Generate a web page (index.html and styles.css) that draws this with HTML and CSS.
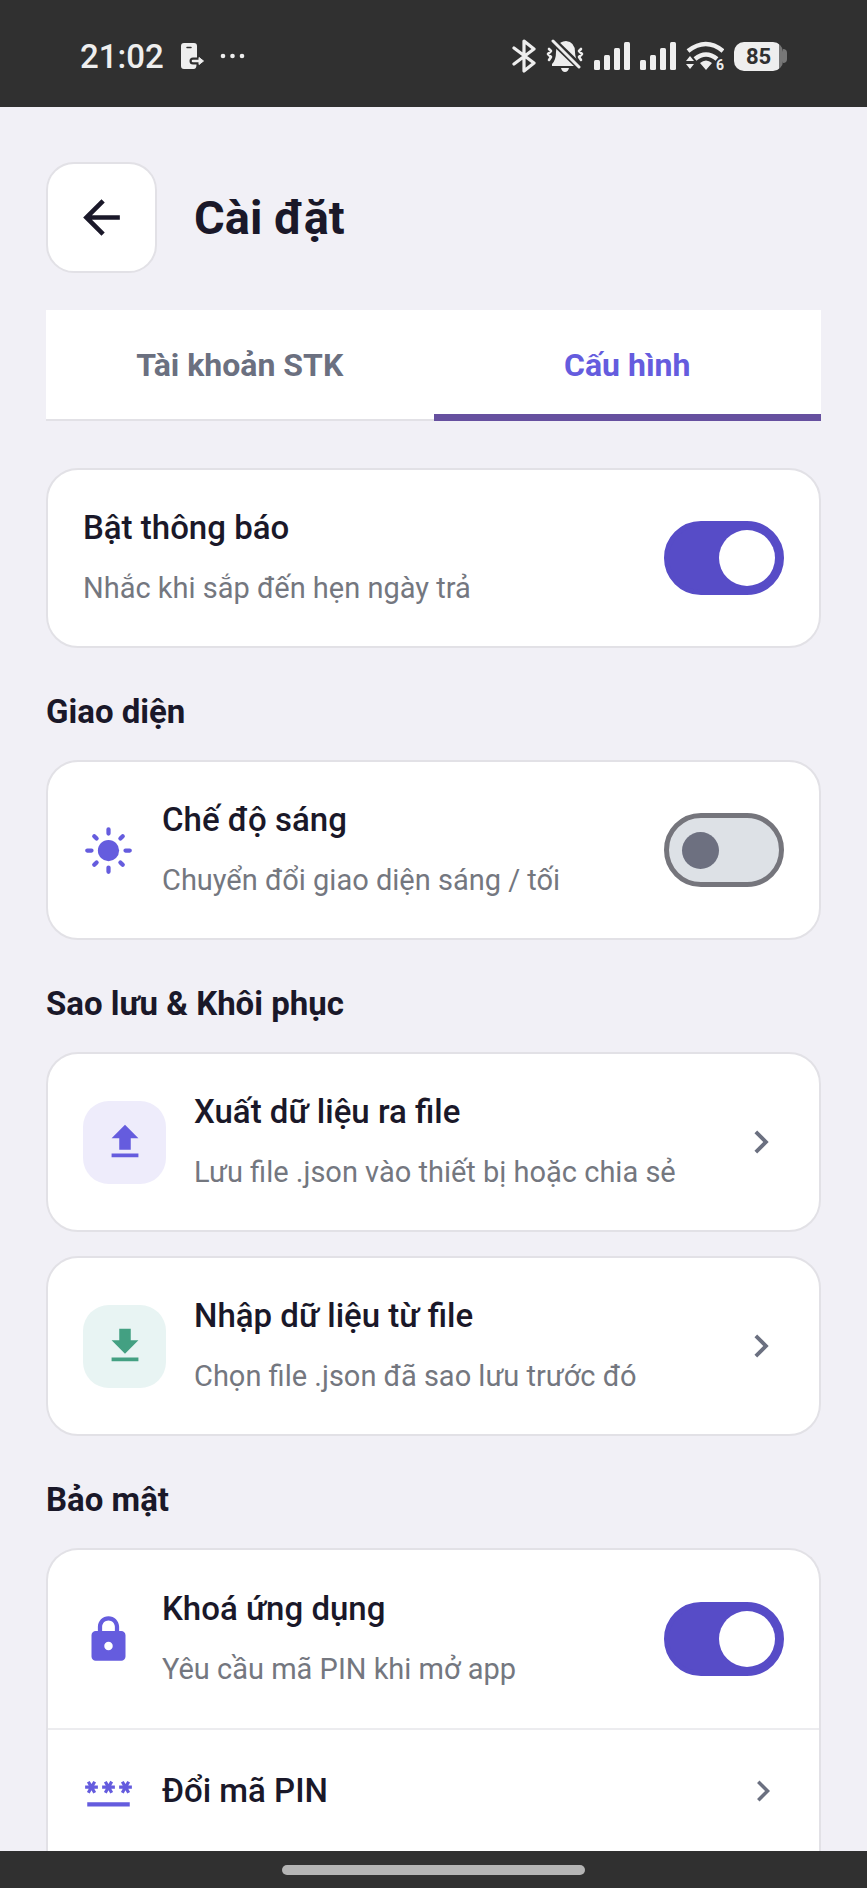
FILE: index.html
```html
<!DOCTYPE html>
<html lang="vi">
<head>
    <meta charset="UTF-8">
    <meta name="viewport" content="width=device-width, initial-scale=1">
    <title>Cài đặt</title>
    <link rel="stylesheet" href="styles.css">
</head>
<body>
<div class="status-bar">
    <div class="status-left">
        <span class="clock">21:02</span>
        <svg width="24" height="28" viewBox="0 0 24 28">
            <path fill="#eee" d="M4 1h10q3 0 3 3v11.500h-4q-3.500 0-3.500 3.500t3.500 3.500h3.500q0 4.500-3 4.500H4q-3 0-3-3V4q0-3 3-3z"/>
            <path stroke="#303030" stroke-width="1.500" stroke-linecap="round" d="M7 5.500h4"/>
            <path fill="none" stroke="#eee" stroke-width="2.600" stroke-linecap="round" d="M13 19h8"/>
            <path fill="#eee" stroke="#eee" stroke-linejoin="round" d="M19 15.500l4.500 3.500-4.500 3.500z"/>
        </svg>
        <svg class="dots" width="26" height="6" viewBox="0 0 26 6" fill="#eee">
            <circle cx="3" cy="3" r="2.300"/>
            <circle cx="12.500" cy="3" r="2.300"/>
            <circle cx="22" cy="3" r="2.300"/>
        </svg>
    </div>
    <div class="status-right">
        <svg width="24" height="34" viewBox="0 0 24 34" fill="none" stroke="#eee" stroke-width="3.200" stroke-linecap="round" stroke-linejoin="round">
            <path d="M2 9l20 15-10 8V2l10 8L2 25"/>
        </svg>
        <svg width="38" height="34" viewBox="0 0 38 34">
            <path fill="#eee" d="M11 8q3-6 9-6 9 1 9 11 0 6 4 12v2H6v-2q4-4 4-12 0-3 1-5zM15 29h8q-1 4-4 4t-4-4z"/>
            <path stroke="#303030" stroke-width="7" d="M4 -1l31 30"/>
            <path stroke="#eee" stroke-width="3" stroke-linecap="round" d="M7 2l26 26"/>
            <path fill="none" stroke="#eee" stroke-width="2.600" stroke-linecap="round" stroke-linejoin="round" d="M3 10l2 2-3 3 3 3-2 3M35 10l-2 2 3 3-3 3 2 3"/>
        </svg>
        <svg width="36" height="30" viewBox="0 0 36 30" fill="#eee">
            <rect x="0" y="19" width="6" height="10" rx="1.500"/>
            <rect x="10" y="14" width="6" height="15" rx="1.500"/>
            <rect x="20" y="7" width="6" height="22" rx="1.500"/>
            <rect x="30" y="1" width="6" height="28" rx="1.500"/>
        </svg>
        <svg width="36" height="30" viewBox="0 0 36 30" fill="#eee">
            <rect x="0" y="19" width="6" height="10" rx="1.500"/>
            <rect x="10" y="14" width="6" height="15" rx="1.500"/>
            <rect x="20" y="7" width="6" height="22" rx="1.500"/>
            <rect x="30" y="1" width="6" height="28" rx="1.500"/>
        </svg>
        <svg width="38" height="32" viewBox="0 0 38 32">
            <path fill="none" stroke="#eee" stroke-width="4.500" d="M2 11q18-14 35 0M9 19q11-9 22 0"/>
            <path fill="#eee" d="M14 23q6-5 12 0l-6 7zM0 21l4-5 4 5zM0 24l4 5 4-5z"/>
            <text x="30" y="30" class="wifi-gen">6</text>
        </svg>
        <span class="battery"><span class="battery-level">85</span></span>
    </div>
</div>

<main class="screen">
    <header class="header">
        <button class="back" type="button" aria-label="Quay lại">
            <svg width="55" height="55" viewBox="0 0 24 24" fill="#1a1829"><path d="M20 11H7.830l5.590-5.590L12 4l-8 8 8 8 1.410-1.410L7.830 13H20z"/></svg>
        </button>
        <h1 class="title">Cài đặt</h1>
    </header>

    <nav class="tabs">
        <button class="tab" type="button">Tài khoản STK</button>
        <button class="tab active" type="button">Cấu hình</button>
    </nav>

    <section class="card">
        <label class="row">
            <span class="text">
                <span class="name">Bật thông báo</span>
                <span class="desc">Nhắc khi sắp đến hẹn ngày trả</span>
            </span>
            <input class="switch" type="checkbox" checked>
        </label>
    </section>

    <h2 class="section-title">Giao diện</h2>
    <section class="card">
        <label class="row">
            <svg class="icon" width="51" height="51" viewBox="0 0 24 24">
                <circle cx="12" cy="12" r="5"/>
                <path stroke="#655cde" stroke-width="2" stroke-linecap="round" d="M12 2v2M12 20v2M2 12h2M20 12h2M5.300 5.300l1.100 1.100M17.600 17.600l1.100 1.100M5.300 18.700l1.100-1.100M17.600 6.400l1.100-1.100"/>
            </svg>
            <span class="text">
                <span class="name">Chế độ sáng</span>
                <span class="desc">Chuyển đổi giao diện sáng / tối</span>
            </span>
            <input class="switch" type="checkbox">
        </label>
    </section>

    <h2 class="section-title">Sao lưu &amp; Khôi phục</h2>
    <div class="card-list">
        <section class="card">
            <button class="row" type="button">
                <span class="badge">
                    <svg class="icon" width="46" height="46" viewBox="0 0 24 24"><path d="M9 16h6v-6h4l-7-7-7 7h4zM5 18h14v2H5z"/></svg>
                </span>
                <span class="text">
                    <span class="name">Xuất dữ liệu ra file</span>
                    <span class="desc">Lưu file .json vào thiết bị hoặc chia sẻ</span>
                </span>
                <svg class="chevron" width="46" height="46" viewBox="0 0 24 24"><path d="M10 6L8.590 7.410 13.170 12l-4.580 4.590L10 18l6-6z"/></svg>
            </button>
        </section>
        <section class="card">
            <button class="row" type="button">
                <span class="badge green">
                    <svg class="icon" width="46" height="46" viewBox="0 0 24 24"><path d="M19 9h-4V3H9v6H5l7 7zM5 18v2h14v-2z"/></svg>
                </span>
                <span class="text">
                    <span class="name">Nhập dữ liệu từ file</span>
                    <span class="desc">Chọn file .json đã sao lưu trước đó</span>
                </span>
                <svg class="chevron" width="46" height="46" viewBox="0 0 24 24"><path d="M10 6L8.590 7.410 13.170 12l-4.580 4.590L10 18l6-6z"/></svg>
            </button>
        </section>
    </div>

    <h2 class="section-title">Bảo mật</h2>
    <section class="card card-open">
        <label class="row">
            <svg class="icon" width="51" height="51" viewBox="0 0 24 24"><path d="M18 8h-1V6c0-2.760-2.240-5-5-5S7 3.240 7 6v2H6c-1.100 0-2 .9-2 2v10c0 1.100.9 2 2 2h12c1.100 0 2-.9 2-2V10c0-1.100-.9-2-2-2zm-6 9c-1.100 0-2-.9-2-2s.9-2 2-2 2 .9 2 2-.9 2-2 2zM9 8V6c0-1.660 1.340-3 3-3s3 1.340 3 3v2H9z"/></svg>
            <span class="text">
                <span class="name">Khoá ứng dụng</span>
                <span class="desc">Yêu cầu mã PIN khi mở app</span>
            </span>
            <input class="switch" type="checkbox" checked>
        </label>
        <button class="row row-next" type="button">
            <svg class="icon" width="51" height="51" viewBox="0 0 24 24"><path d="M2 17h20v2H2v-2zm1.150-4.050L4 11.470l.85 1.480 1.300-.75-.85-1.480H7v-1.500H5.300l.85-1.470L4.850 7 4 8.470 3.150 7l-1.300.75.85 1.470H1v1.500h1.700l-.85 1.480 1.300.75zm6.700-.75l1.300.75.85-1.480.85 1.480 1.300-.75-.85-1.480H15v-1.500h-1.700l.85-1.470-1.300-.75L12 8.470 11.150 7l-1.300.75.85 1.470H9v1.500h1.700l-.85 1.480zM23 9.220h-1.700l.85-1.470-1.300-.75L20 8.470 19.150 7l-1.300.75.85 1.470H17v1.500h1.700l-.85 1.480 1.300.75.85-1.480.85 1.480 1.300-.75-.85-1.480H23v-1.500z"/></svg>
            <span class="text">
                <span class="name">Đổi mã PIN</span>
            </span>
            <svg class="chevron" width="42" height="42" viewBox="0 0 24 24"><path d="M10 6L8.590 7.410 13.170 12l-4.580 4.590L10 18l6-6z"/></svg>
        </button>
    </section>
</main>

<div class="nav-bar">
    <div class="handle"></div>
</div>
</body>
</html>
```
FILE: styles.css
```css
* {
    margin: 0;
    padding: 0;
    box-sizing: border-box;
}

body {
    display: flex;
    flex-direction: column;
    height: 100vh;
    background: #f1f0f6;
    color: #1a1829;
    font-family: Roboto, "Noto Sans", sans-serif;
}

button {
    border: none;
    background: none;
    color: inherit;
    font: inherit;
    text-align: left;
    cursor: pointer;
}

svg {
    display: block;
    flex-shrink: 0;
}

/* status bar */
.status-bar {
    display: flex;
    justify-content: space-between;
    align-items: center;
    flex-shrink: 0;
    height: 107px;
    padding: 5px 80px 0;
    background: #303030;
    color: #eee;
}

.status-left,
.status-right {
    display: flex;
    align-items: center;
}

.status-left {
    gap: 16px;
}

.status-right {
    gap: 10px;
}

.clock {
    font-size: 33px;
    font-weight: 500;
}

.wifi-gen {
    fill: #eee;
    font-size: 14px;
    font-weight: 700;
}

.battery {
    display: flex;
    align-items: center;
}

.battery::after {
    content: "";
    width: 4px;
    height: 14px;
    border-radius: 0 4px 4px 0;
    background: #777;
}

.battery-level {
    width: 49px;
    border-radius: 10px;
    background: linear-gradient(to right, #eee 45px, #777 45px);
    color: #303030;
    font-size: 22px;
    font-weight: 700;
    line-height: 29px;
    text-align: center;
}

/* content */
.screen {
    display: flex;
    flex-direction: column;
    flex: 1;
    min-height: 0;
    padding: 55px 46px 0;
    overflow: hidden;
}

.header {
    display: flex;
    align-items: center;
    gap: 37px;
}

.back {
    display: flex;
    justify-content: center;
    align-items: center;
    width: 111px;
    height: 111px;
    border: 2px solid #e2e1e6;
    border-radius: 28px;
    background: #fff;
}

.title {
    font-size: 47px;
    font-weight: 700;
}

.tabs {
    display: flex;
    margin: 37px 0 47px;
    background: #fff;
}

.tab {
    flex: 1;
    height: 111px;
    border-bottom: 2px solid #e2e1e6;
    color: #6b7080;
    font-size: 32px;
    font-weight: 700;
    text-align: center;
}

.tab.active {
    padding-top: 5px;
    border-bottom: 7px solid #66509f;
    color: #655cde;
}

.section-title {
    padding: 42px 0 26px;
    font-size: 33px;
    font-weight: 700;
    line-height: 44px;
}

.card {
    border: 2px solid #e2e1e6;
    border-radius: 32px;
    background: #fff;
}

.card-list {
    display: flex;
    flex-direction: column;
    gap: 24px;
}

.row {
    display: flex;
    align-items: center;
    gap: 28px;
    width: 100%;
    padding: 28px 35px;
}

/* the last card runs on under the navigation bar */
.card-open {
    flex: 1;
    border-bottom: none;
    border-radius: 32px 32px 0 0;
}

.card-open .row {
    padding: 29px 35px;
}

.card-open .row-next {
    padding: 31px 35px;
    border-top: 2px solid #ececef;
}

.text {
    display: flex;
    flex-direction: column;
    flex: 1;
    line-height: 60px;
}

.name {
    font-size: 33px;
    font-weight: 500;
}

.desc {
    color: #74777f;
    font-size: 29px;
}

.icon {
    fill: #655cde;
}

.chevron {
    fill: #6b7080;
}

.badge {
    display: flex;
    justify-content: center;
    align-items: center;
    width: 83px;
    height: 83px;
    border-radius: 26px;
    background: #eeecfb;
}

.badge.green {
    background: #e8f4f3;
}

.badge.green .icon {
    fill: #43a082;
}

.switch {
    display: flex;
    align-items: center;
    flex-shrink: 0;
    width: 120px;
    height: 74px;
    padding-left: 13px;
    border: 5px solid #75757c;
    border-radius: 37px;
    background: #dde1e6;
    appearance: none;
    cursor: pointer;
}

.switch::before {
    content: "";
    width: 37px;
    height: 37px;
    border-radius: 50%;
    background: #6d7080;
}

.switch:checked {
    justify-content: flex-end;
    padding: 0 4px 0 0;
    border-color: #574cc7;
    background: #574cc7;
}

.switch:checked::before {
    width: 56px;
    height: 56px;
    background: #fff;
}

/* gesture bar */
.nav-bar {
    display: flex;
    justify-content: center;
    align-items: center;
    flex-shrink: 0;
    height: 37px;
    background: #303030;
}

.handle {
    width: 35%;
    height: 10px;
    border-radius: 5px;
    background: #b4b4b4;
}
```
